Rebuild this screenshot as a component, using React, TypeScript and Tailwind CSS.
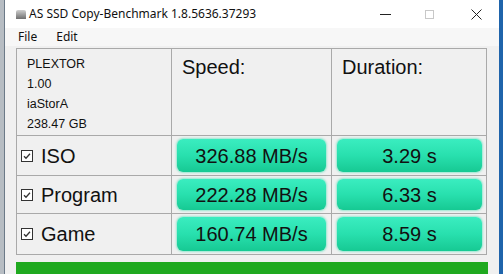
import React from 'react';

const rows = [
  { name: 'ISO', speed: '326.88 MB/s', dur: '3.29 s', h: 'h-[40px]' },
  { name: 'Program', speed: '222.28 MB/s', dur: '6.33 s', h: 'h-[38px]' },
  { name: 'Game', speed: '160.74 MB/s', dur: '8.59 s', h: 'h-[40px]' },
];

const Check: React.FC = () => (
  <span className="w-[12px] h-[12px] border border-[#333] bg-white flex items-center justify-center shrink-0">
    <svg width="10" height="10" viewBox="0 0 10 10">
      <path d="M2 5.2 L4 7.2 L8 2.8" fill="none" stroke="#333" strokeWidth="1.3" />
    </svg>
  </span>
);

const Result: React.FC<{ text: string }> = ({ text }) => (
  <div className="h-full rounded-[6px] bg-gradient-to-b from-[#3aedc0] via-[#28e0ae] via-50% to-[#16c993] shadow-[0_0_2px_1px_rgba(40,220,170,0.45)] flex items-center justify-center text-[20px] text-[#111]">
    {text}
  </div>
);

export default function App() {
  return (
    <div className="w-[503px] h-[274px] flex bg-[#1f64ab] overflow-hidden" style={{ fontFamily: '"Noto Sans", "Open Sans", sans-serif' }}>
      <div className="w-[4px] bg-[#b7bdc3]" />
      <div className="w-[495px] h-full flex flex-col bg-[#f0f0f0] border-l border-[#6c7a88]">
        {/* title bar */}
        <div className="h-[30px] bg-white flex items-center text-[12px] text-[#111]">
          <div className="ml-[11px] w-[10px] h-[9px] bg-gradient-to-b from-[#d0d0d0] to-[#707070] rounded-t-[2px]" />
          <span className="ml-[3px] leading-none">AS SSD Copy-Benchmark 1.8.5636.37293</span>
          <div className="ml-auto flex items-center">
            <span className="w-[11px] h-px bg-[#222] mr-[34px]" />
            <span className="w-[9px] h-[9px] border border-[#c8c8c8] mr-[37px]" />
            <svg width="11" height="11" viewBox="0 0 11 11" className="mr-[17px]">
              <path d="M0.5 0.5 L10.5 10.5 M10.5 0.5 L0.5 10.5" stroke="#222" strokeWidth="1" />
            </svg>
          </div>
        </div>
        {/* menu */}
        <div className="h-[19px] bg-[#f7f7f7] flex items-center text-[12px] text-[#111] pl-[13px] gap-[19px]">
          <span>File</span>
          <span>Edit</span>
        </div>
        {/* table */}
        <div className="pl-[11px] pt-[2px]" style={{ fontFamily: '"Liberation Sans", Arial, sans-serif' }}>
          <div className="w-[471px] border border-[#a9a9a9] grid grid-cols-[155px_160px_1fr]">
            <div className="h-[87px] border-r border-b border-[#a9a9a9] pl-[10px] pt-[7px] text-[12.5px] text-[#111] flex flex-col gap-[4px] leading-[16px]">
              <span>PLEXTOR</span>
              <span>1.00</span>
              <span>iaStorA</span>
              <span>238.47 GB</span>
            </div>
            <div className="border-r border-b border-[#a9a9a9] pl-[10px] pt-[3px] text-[20px] text-[#111]">Speed:</div>
            <div className="border-b border-[#a9a9a9] pl-[10px] pt-[3px] text-[20px] text-[#111]">Duration:</div>
            {rows.map((r, i) => (
              <React.Fragment key={r.name}>
                <div className={`${r.h} border-r border-[#a9a9a9] ${i < 2 ? 'border-b' : ''} flex items-center pl-[4px] gap-[8px] text-[20px] text-[#111]`}>
                  <Check />
                  <span>{r.name}</span>
                </div>
                <div className={`${r.h} border-r border-[#a9a9a9] ${i < 2 ? 'border-b' : ''} px-[5px] py-[3px]`}>
                  <Result text={r.speed} />
                </div>
                <div className={`${r.h} border-[#a9a9a9] ${i < 2 ? 'border-b' : ''} pl-[5px] pr-[4px] py-[3px]`}>
                  <Result text={r.dur} />
                </div>
              </React.Fragment>
            ))}
          </div>
          <div className="mt-[7px] w-[472px] h-[12px] bg-[#1fa91f]" />
        </div>
      </div>
    </div>
  );
}
